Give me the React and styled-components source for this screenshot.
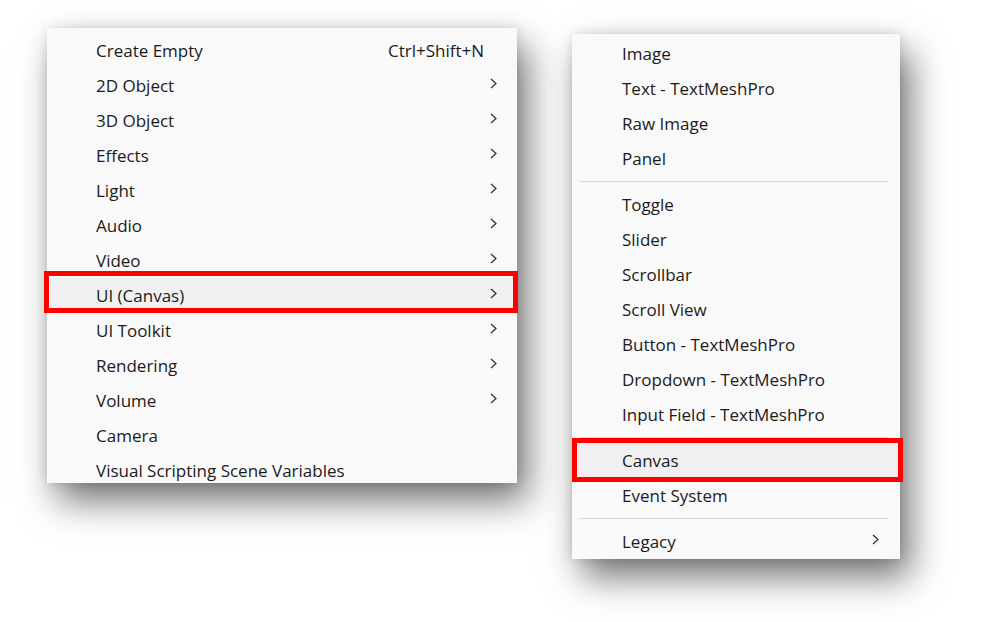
import styled, { createGlobalStyle } from "styled-components"

const GlobalStyle = createGlobalStyle`
  html, body {
    margin: 0;
    padding: 0;
    background: #ffffff;
  }
  body {
    font-family: "Open Sans", "Noto Sans", "Liberation Sans", sans-serif;
  }
`;

const Page = styled.div`
  width: 997px;
  height: 622px;
  display: flex;
  align-items: flex-start;
  padding-left: 47px;
  box-sizing: border-box;
  overflow: hidden;
`;

const Menu = styled.div`
  margin-top: ${(p) => p.$top}px;
  margin-left: ${(p) => p.$gap || 0}px;
  width: ${(p) => p.$width}px;
  height: ${(p) => (p.$height ? `${p.$height}px` : "auto")};
  padding-top: ${(p) => p.$padTop}px;
  box-sizing: border-box;
  background: #f9f9f9;
  display: flex;
  flex-direction: column;
  overflow-x: visible;
  overflow-y: ${(p) => (p.$height ? "clip" : "visible")};
  box-shadow: 10px 18px 34px rgba(0, 0, 0, 0.55), 0 0 10px rgba(0, 0, 0, 0.12);
  flex-shrink: 0;
`;

const Item = styled.div`
  position: relative;
  flex-shrink: 0;
  height: 35px;
  display: flex;
  align-items: center;
  padding-left: ${(p) => p.$indent}px;
  padding-right: ${(p) => p.$padRight}px;
  font-size: 17px;
  color: #1b1b1b;
  background: ${(p) => (p.$active ? "#f0f0f0" : "transparent")};
  white-space: nowrap;
`;

const Label = styled.span`
  flex: 1;
`;

const Shortcut = styled.span`
  margin-right: 13px;
`;

// red outline drawn over a selected row
const Marker = styled.div`
  position: absolute;
  left: ${(p) => p.$l}px;
  right: ${(p) => p.$r}px;
  top: ${(p) => p.$t}px;
  bottom: ${(p) => p.$b}px;
  border: 5px solid #ff0000;
  pointer-events: none;
`;

const Separator = styled.div`
  flex-shrink: 0;
  height: 1px;
  margin: 5px 12px 5px 7px;
  background: #d9d9d9;
`;

const Chevron = () => (
  <svg width="7" height="11" viewBox="0 0 7 11" style={{ marginTop: -5 }}>
    <polyline points="1,1 6,5.5 1,10" fill="none" stroke="#2a2a2a" strokeWidth="1.2" />
  </svg>
);

const gameObjectItems = [
  { label: "Create Empty", shortcut: "Ctrl+Shift+N" },
  { label: "2D Object", sub: true },
  { label: "3D Object", sub: true },
  { label: "Effects", sub: true },
  { label: "Light", sub: true },
  { label: "Audio", sub: true },
  { label: "Video", sub: true },
  { label: "UI (Canvas)", sub: true, marked: true },
  { label: "UI Toolkit", sub: true },
  { label: "Rendering", sub: true },
  { label: "Volume", sub: true },
  { label: "Camera" },
  { label: "Visual Scripting Scene Variables" },
];

const uiItems = [
  { label: "Image" },
  { label: "Text - TextMeshPro" },
  { label: "Raw Image" },
  { label: "Panel" },
  { sep: true },
  { label: "Toggle" },
  { label: "Slider" },
  { label: "Scrollbar" },
  { label: "Scroll View" },
  { label: "Button - TextMeshPro" },
  { label: "Dropdown - TextMeshPro" },
  { label: "Input Field - TextMeshPro" },
  { sep: true },
  { label: "Canvas", marked: true },
  { label: "Event System" },
  { sep: true },
  { label: "Legacy", sub: true },
];

export default function App() {
  return (
    <>
      <GlobalStyle />
      <Page>
        <Menu $top={28} $width={470} $height={455} $padTop={5}>
          {gameObjectItems.map((it) => (
            <Item key={it.label} $indent={49} $padRight={20} $active={it.marked}>
              <Label>{it.label}</Label>
              {it.shortcut && <Shortcut>{it.shortcut}</Shortcut>}
              {it.sub && <Chevron />}
              {it.marked && <Marker $l={-3} $r={-1} $t={-7} $b={0} />}
            </Item>
          ))}
        </Menu>
        <Menu $top={34} $gap={55} $width={328} $padTop={2}>
          {uiItems.map((it, i) =>
            it.sep ? (
              <Separator key={i} />
            ) : (
              <Item key={it.label} $indent={50} $padRight={21} $active={it.marked}>
                <Label>{it.label}</Label>
                {it.sub && <Chevron />}
                {it.marked && <Marker $l={0} $r={-3} $t={-5} $b={-4} />}
              </Item>
            )
          )}
        </Menu>
      </Page>
    </>
  );
}
